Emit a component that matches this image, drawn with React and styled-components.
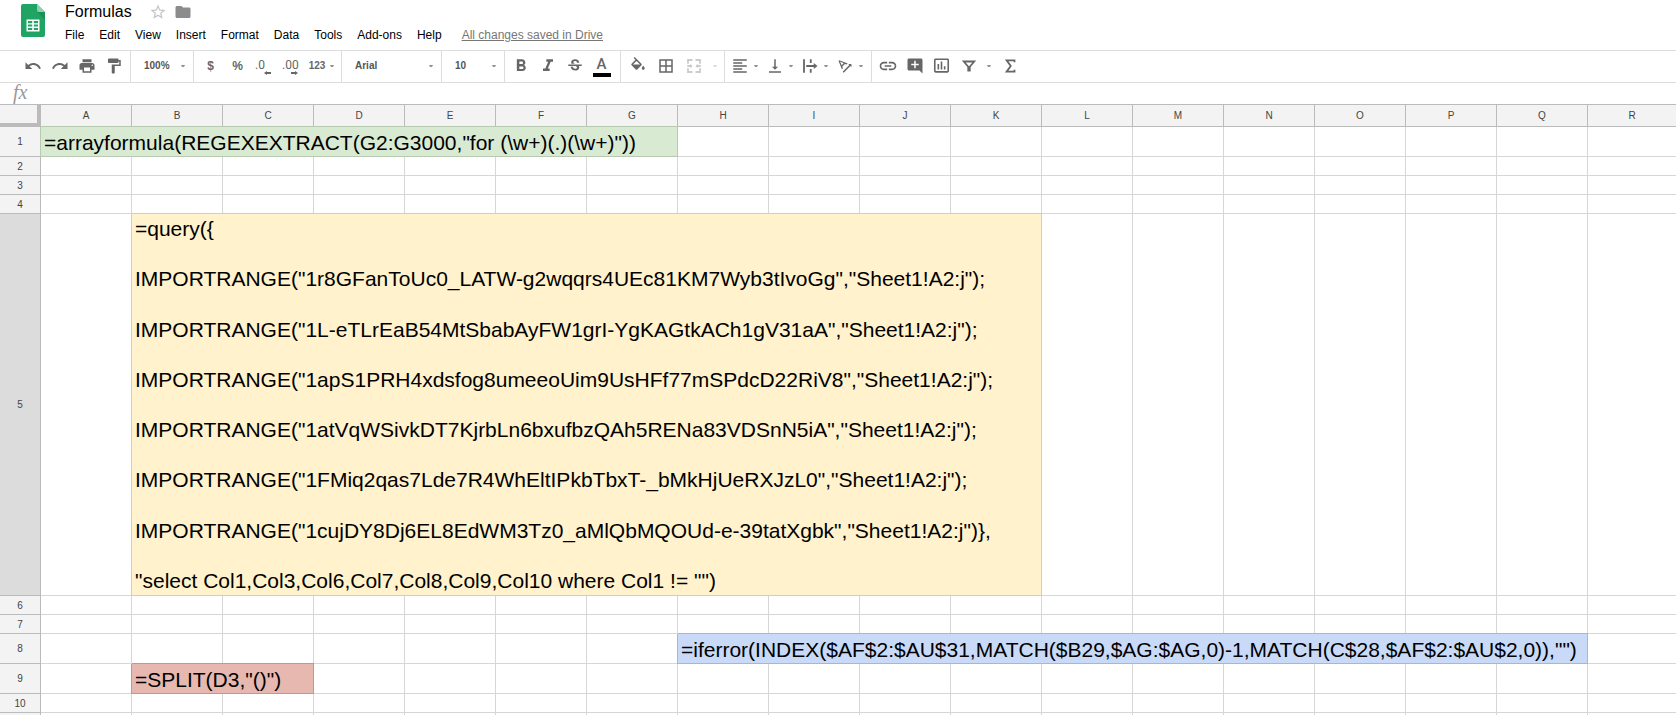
import React from "react";
import styled, { createGlobalStyle } from "styled-components";
import {
  MdUndo,
  MdRedo,
  MdPrint,
  MdFormatPaint,
  MdFormatBold,
  MdFormatItalic,
  MdStrikethroughS,
  MdBorderAll,
  MdFormatAlignLeft,
  MdVerticalAlignBottom,
  MdTextRotationAngleup,
  MdLink,
  MdAddComment,
  MdInsertChartOutlined,
  MdStarBorder,
  MdFolder,
} from "react-icons/md";

const menus = ["File", "Edit", "View", "Insert", "Format", "Data", "Tools", "Add-ons", "Help"];
const columns = "ABCDEFGHIJKLMNOPQR".split("");

const queryLines = [
  '=query({',
  'IMPORTRANGE("1r8GFanToUc0_LATW-g2wqqrs4UEc81KM7Wyb3tIvoGg","Sheet1!A2:j");',
  'IMPORTRANGE("1L-eTLrEaB54MtSbabAyFW1grI-YgKAGtkACh1gV31aA","Sheet1!A2:j");',
  'IMPORTRANGE("1apS1PRH4xdsfog8umeeoUim9UsHFf77mSPdcD22RiV8","Sheet1!A2:j");',
  'IMPORTRANGE("1atVqWSivkDT7KjrbLn6bxufbzQAh5RENa83VDSnN5iA","Sheet1!A2:j");',
  'IMPORTRANGE("1FMiq2qas7Lde7R4WhEltIPkbTbxT-_bMkHjUeRXJzL0","Sheet1!A2:j");',
  'IMPORTRANGE("1cujDY8Dj6EL8EdWM3Tz0_aMlQbMQOUd-e-39tatXgbk","Sheet1!A2:j")},',
  '"select Col1,Col3,Col6,Col7,Col8,Col9,Col10 where Col1 != "")',
];

// at = column index where the merged cell starts
const rows = [
  { size: "tall", merge: { at: 0, span: 7, tone: "green", lines: ['=arrayformula(REGEXEXTRACT(G2:G3000,"for (\\w+)(.)(\\w+)"))'] } },
  { size: "normal" },
  { size: "normal" },
  { size: "normal" },
  { size: "query", active: true, merge: { at: 1, span: 10, tone: "yellow", lines: queryLines } },
  { size: "normal" },
  { size: "normal" },
  { size: "tall", merge: { at: 7, span: 10, tone: "blue", lines: ['=iferror(INDEX($AF$2:$AU$31,MATCH($B29,$AG:$AG,0)-1,MATCH(C$28,$AF$2:$AU$2,0)),"")'] } },
  { size: "tall", merge: { at: 1, span: 2, tone: "red", lines: ['=SPLIT(D3,"()")'] } },
  { size: "normal" },
  { size: "normal", blank: true },
];

const rowHeights = { normal: 19, tall: 30, query: 382 };

const tones = {
  green: { fill: "#d9ead3", line: "#b7c9b1" },
  yellow: { fill: "#fff2cc", line: "#d9ceab" },
  blue: { fill: "#c9daf8", line: "#a5b7d9" },
  red: { fill: "#e6b8af", line: "#c9958b" },
};

const Logo = () => (
  <svg width="24" height="33" viewBox="0 0 24 33" aria-label="Sheets">
    <path d="M2 0h14l8 8v23a2 2 0 0 1-2 2H2a2 2 0 0 1-2-2V2a2 2 0 0 1 2-2z" fill="#1fa463" />
    <path d="M16 8h8v8z" fill="#16804c" opacity=".5" />
    <path d="M16 0l8 8h-6a2 2 0 0 1-2-2z" fill="#8ed1b1" />
    <path
      fillRule="evenodd"
      d="M5.500 15.500h13v12h-13zM7 17v2.200h4.200V17zm5.800 0v2.200H17V17zM7 20.500v2h4.200v-2zm5.800 0v2H17v-2zM7 23.900v2.100h4.200v-2.100zm5.800 0v2.100H17v-2.100z"
      fill="#fff"
    />
  </svg>
);

const FillIcon = () => (
  <svg width="18" height="18" viewBox="0 0 24 24" fill="currentColor">
    <path d="M16.560 8.940L7.620 0 6.210 1.410l2.380 2.380-5.150 5.150c-.590.590-.590 1.540 0 2.120l5.500 5.500c.290.290.680.440 1.060.440s.770-.150 1.060-.440l5.500-5.500c.590-.580.590-1.530 0-2.120zM5.210 10L10 5.210 14.790 10H5.210zM19 11.500s-2 2.170-2 3.500c0 1.100.9 2 2 2s2-.9 2-2c0-1.330-2-3.500-2-3.500z" />
  </svg>
);

const MergeIcon = () => (
  <svg width="18" height="18" viewBox="0 0 24 24" fill="none" stroke="currentColor" strokeWidth="2.400">
    <path d="M10 4H4v5M14 4h6v5M10 20H4v-5M14 20h6v-5M3 12h6M21 12h-6" />
    <path d="M7 9l3 3-3 3zM17 9l-3 3 3 3z" fill="currentColor" stroke="none" />
  </svg>
);

const OverflowIcon = () => (
  <svg width="18" height="18" viewBox="0 0 24 24" fill="none" stroke="currentColor" strokeWidth="2.400">
    <path d="M4 3v18M13 3v5M13 16v5M7 12h12" />
    <path d="M17 8l5 4-5 4z" fill="currentColor" stroke="none" />
  </svg>
);

const FilterIcon = () => (
  <svg width="18" height="18" viewBox="0 0 24 24" fill="none" stroke="currentColor" strokeWidth="2.400">
    <path d="M5 6h14l-6 7v5h-2v-5z" />
  </svg>
);

const SumIcon = () => (
  <svg width="18" height="18" viewBox="0 0 24 24" fill="none" stroke="currentColor" strokeWidth="2.400">
    <path d="M18 7V4.500H7.500L13 12l-5.500 7.500H18V17" />
  </svg>
);

const Caret = () => (
  <CaretStyled width="4" height="2" viewBox="0 0 4 2">
    <path d="M0 0h4L3 2H1z" fill="currentColor" />
  </CaretStyled>
);

const Arrow = ({ right }) => (
  <svg width="7" height="4" viewBox="0 0 7 4">
    <path d={right ? "M0 1h4V0l3 2-3 2V3H0z" : "M7 1H3V0L0 2l3 2V3h4z"} fill="currentColor" />
  </svg>
);

const IconBtn = ({ label, children, ...rest }) => (
  <ToolButton type="button" aria-label={label} {...rest}>
    {children}
  </ToolButton>
);

const Picker = ({ label, value, width }) => (
  <PickerStyled $width={width}>
    <select aria-label={label} defaultValue={value}>
      <option>{value}</option>
    </select>
    <Caret />
  </PickerStyled>
);

const Header = () => (
  <HeaderStyled>
    <Logo />
    <div>
      <TitleRow>
        <h1>Formulas</h1>
        <TitleButton type="button" aria-label="Star" $color="#c4c4c4">
          <MdStarBorder size={18} />
        </TitleButton>
        <TitleButton type="button" aria-label="Move to folder" $color="#8c8c8c">
          <MdFolder size={18} />
        </TitleButton>
      </TitleRow>
      <MenuRow>
        {menus.map((m) => (
          <button type="button" key={m}>{m}</button>
        ))}
        <a href="#saved">All changes saved in Drive</a>
      </MenuRow>
    </div>
  </HeaderStyled>
);

const Toolbar = () => (
  <ToolbarStyled role="toolbar" aria-label="Formatting">
    <Group $left={19}>
      <IconBtn label="Undo"><MdUndo size={18} /></IconBtn>
      <IconBtn label="Redo"><MdRedo size={18} /></IconBtn>
      <IconBtn label="Print"><MdPrint size={18} /></IconBtn>
      <IconBtn label="Paint format"><MdFormatPaint size={18} /></IconBtn>
    </Group>
    <Group $left={0} $right={0}>
      <Picker label="Zoom" value="100%" width={62} />
    </Group>
    <Group>
      <IconBtn label="Currency">$</IconBtn>
      <IconBtn label="Percent">%</IconBtn>
      <DecimalButton type="button" aria-label="Decrease decimal places">.0<Arrow /></DecimalButton>
      <DecimalButton type="button" aria-label="Increase decimal places">.00<Arrow right /></DecimalButton>
      <NumberButton type="button">123<Caret /></NumberButton>
    </Group>
    <Group $left={0} $right={0}>
      <Picker label="Font" value="Arial" width={99} />
    </Group>
    <Group $left={0} $right={0}>
      <Picker label="Font size" value="10" width={62} />
    </Group>
    <Group $left={2} $right={5}>
      <IconBtn label="Bold"><MdFormatBold size={20} /></IconBtn>
      <IconBtn label="Italic"><MdFormatItalic size={20} /></IconBtn>
      <IconBtn label="Strikethrough"><MdStrikethroughS size={18} /></IconBtn>
      <ColorButton type="button" aria-label="Text color">A</ColorButton>
    </Group>
    <Group $gap={1} $right={2}>
      <IconBtn label="Fill color"><FillIcon /></IconBtn>
      <IconBtn label="Borders"><MdBorderAll size={18} /></IconBtn>
      <IconBtn label="Merge cells" disabled><MergeIcon /></IconBtn>
      <IconBtn label="Merge options" $narrow disabled><Caret /></IconBtn>
    </Group>
    <Group $gap={8} $left={6} $right={8}>
      <IconBtn label="Horizontal align"><MdFormatAlignLeft size={18} /><Caret /></IconBtn>
      <IconBtn label="Vertical align"><MdVerticalAlignBottom size={18} /><Caret /></IconBtn>
      <IconBtn label="Text wrapping"><OverflowIcon /><Caret /></IconBtn>
      <IconBtn label="Text rotation"><MdTextRotationAngleup size={18} /><Caret /></IconBtn>
    </Group>
    <Group $left={2} $last>
      <IconBtn label="Insert link"><MdLink size={20} /></IconBtn>
      <IconBtn label="Insert comment"><MdAddComment size={18} /></IconBtn>
      <IconBtn label="Insert chart"><MdInsertChartOutlined size={19} /></IconBtn>
      <IconBtn label="Filter"><FilterIcon /></IconBtn>
      <IconBtn label="Filter views" $narrow><Caret /></IconBtn>
      <IconBtn label="Functions"><SumIcon /></IconBtn>
    </Group>
  </ToolbarStyled>
);

const Row = ({ row, number }) => {
  const { merge } = row;
  const cells = [];
  for (let i = 0; i < columns.length; i++) {
    if (merge && i === merge.at) {
      cells.push(
        <MergedCell key={i} colSpan={merge.span} $tone={tones[merge.tone]}>
          <Lines $fill={merge.lines.length > 1}>
            {merge.lines.map((line) => (
              <p key={line}>{line}</p>
            ))}
          </Lines>
        </MergedCell>
      );
      i += merge.span - 1;
    } else {
      cells.push(<Cell key={i} />);
    }
  }
  return (
    <RowStyled $size={row.size}>
      <RowHead scope="row" $active={row.active}>{row.blank ? null : number}</RowHead>
      {cells}
    </RowStyled>
  );
};

const App = () => {
  return (
    <Page>
      <GlobalStyle />
      <Header />
      <Toolbar />
      <FormulaBar>
        <label htmlFor="formula">fx</label>
        <input id="formula" type="text" />
      </FormulaBar>
      <SheetArea>
        <Sheet>
          <colgroup>
            <HeadCol />
            {columns.map((c, i) => (
              <DataCol key={c} $auto={i === columns.length - 1} />
            ))}
          </colgroup>
          <thead>
            <tr>
              <Corner />
              {columns.map((c) => (
                <ColHead key={c} scope="col">{c}</ColHead>
              ))}
            </tr>
          </thead>
          <tbody>
            {rows.map((row, i) => (
              <Row key={i} row={row} number={i + 1} />
            ))}
          </tbody>
        </Sheet>
      </SheetArea>
    </Page>
  );
};

// styles
const GlobalStyle = createGlobalStyle`
  * {
    box-sizing: border-box;
  }
  body {
    margin: 0;
    background: #fff;
    font-family: "Liberation Sans", Arial, sans-serif;
    overflow: hidden;
  }
  button, select, input {
    margin: 0;
    padding: 0;
    border: 0;
    background: none;
    font-family: inherit;
    color: inherit;
  }
`;

const Page = styled.div`
  display: flex;
  flex-direction: column;
  height: 100vh;
  overflow: hidden;
`;

const HeaderStyled = styled.header`
  display: flex;
  gap: 20px;
  padding: 4px 0 0 21px;
  height: 50px;
  flex: none;
`;

const TitleRow = styled.div`
  display: flex;
  align-items: center;
  height: 16px;
  & h1 {
    margin: 0 17px 0 0;
    font-size: 16px;
    line-height: 16px;
    font-weight: normal;
    color: #000;
  }
`;

const TitleButton = styled.button`
  display: flex;
  margin-right: 7px;
  color: ${({ $color }) => $color};
`;

const MenuRow = styled.nav`
  display: flex;
  align-items: center;
  gap: 15px;
  height: 16px;
  margin-top: 7px;
  font-size: 12px;
  white-space: nowrap;
  & button {
    font-size: 12px;
    color: #000;
  }
  & a {
    margin-left: 5px;
    color: #777;
  }
`;

const ToolbarStyled = styled.div`
  display: flex;
  height: 33px;
  flex: none;
  border-top: 1px solid #ddd;
  border-bottom: 1px solid #ddd;
  color: #666;
`;

const Group = styled.div`
  display: flex;
  align-items: center;
  gap: ${({ $gap }) => $gap || 0}px;
  padding: 0 ${({ $right = 3 }) => $right}px 2px ${({ $left = 3 }) => $left}px;
  border-right: ${({ $last }) => ($last ? "none" : "1px solid #ddd")};
`;

const ToolButton = styled.button`
  display: flex;
  align-items: center;
  justify-content: center;
  gap: 5px;
  width: ${({ $narrow }) => ($narrow ? 14 : 27)}px;
  height: 28px;
  font-size: 12px;
  font-weight: bold;
  &:disabled {
    color: #ccc;
  }
  & svg {
    flex: none;
  }
`;

const DecimalButton = styled(ToolButton)`
  flex-direction: column;
  align-items: flex-start;
  gap: 0;
  padding: 3px 0 0 4px;
  font-family: Roboto, "Liberation Sans", sans-serif;
  font-weight: normal;
  line-height: 12px;
  & svg {
    align-self: flex-end;
    margin-right: 7px;
  }
`;

const NumberButton = styled(ToolButton)`
  width: 33px;
  font-size: 10px;
`;

const ColorButton = styled(ToolButton)`
  flex-direction: column;
  gap: 2px;
  padding-top: 3px;
  font-family: Roboto, "Liberation Sans", sans-serif;
  font-size: 15px;
  font-weight: 500;
  line-height: 14px;
  &::after {
    content: "";
    width: 18px;
    height: 4px;
    background: #000;
  }
`;

const CaretStyled = styled.svg`
  flex: none;
  opacity: 0.7;
`;

const PickerStyled = styled.div`
  display: flex;
  align-items: center;
  width: ${({ $width }) => $width}px;
  padding: 0 8px 0 13px;
  & select {
    flex: 1;
    min-width: 0;
    appearance: none;
    font-size: 10px;
    font-weight: bold;
    color: #555;
  }
`;

const FormulaBar = styled.div`
  display: flex;
  align-items: center;
  height: 21px;
  flex: none;
  padding: 0 0 3px 13px;
  & label {
    width: 24px;
    font-family: "Liberation Serif", "Times New Roman", serif;
    font-style: italic;
    font-size: 20px;
    line-height: 18px;
    color: #999;
  }
  & input {
    flex: 1;
    height: 18px;
    font-size: 13px;
  }
`;

const SheetArea = styled.main`
  flex: 1;
  min-height: 0;
  overflow: hidden;
  border-top: 1px solid #bbb;
`;

const Sheet = styled.table`
  width: 100%;
  table-layout: fixed;
  border-collapse: separate;
  border-spacing: 0;
  & tr > :last-child {
    border-right: none;
  }
`;

const HeadCol = styled.col`
  width: 41px;
`;

const DataCol = styled.col`
  width: ${({ $auto }) => ($auto ? "auto" : "91px")};
`;

const ColHead = styled.th`
  height: 22px;
  padding: 0;
  background: #f3f3f3;
  border-right: 1px solid #bbb;
  border-bottom: 1px solid #bbb;
  font-size: 10px;
  font-weight: normal;
  color: #444;
`;

const Corner = styled.td`
  padding: 0;
  background: #f3f3f3;
  border-right: 4px solid #bbb;
  border-bottom: 4px solid #bbb;
`;

const RowStyled = styled.tr`
  height: ${({ $size }) => rowHeights[$size]}px;
`;

const RowHead = styled(ColHead)`
  height: auto;
  padding-top: 1px;
  line-height: 10px;
  background: ${({ $active }) => ($active ? "#dcdcdc" : "#f3f3f3")};
`;

const Cell = styled.td`
  padding: 0;
  border-right: 1px solid #d6d6d6;
  border-bottom: 1px solid #d6d6d6;
`;

const MergedCell = styled(Cell)`
  padding: 1px 3px;
  vertical-align: bottom;
  background: ${({ $tone }) => $tone.fill};
  border-color: ${({ $tone }) => $tone.line};
  box-shadow: -1px 0 0 ${({ $tone }) => $tone.line}, 0 -1px 0 ${({ $tone }) => $tone.line};
`;

const Lines = styled.div`
  display: flex;
  flex-direction: column;
  justify-content: space-between;
  height: ${({ $fill }) => ($fill ? "378px" : "auto")};
  padding: ${({ $fill }) => ($fill ? "1px 0" : "0")};
  & p {
    margin: 0;
    font-size: 21px;
    line-height: 24px;
    white-space: nowrap;
    color: #000;
  }
`;

export default App;
